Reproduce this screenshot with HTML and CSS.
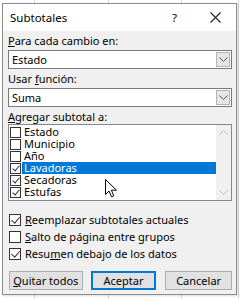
FILE: index.html
```html
<!DOCTYPE html>
<html lang="es">
<head>
    <meta charset="UTF-8">
    <title>Subtotales</title>
    <link rel="stylesheet" href="styles.css">
</head>
<body>
    <div class="dialog">
        <div class="titlebar">
            <span class="title">Subtotales</span>
            <span class="help">?</span>
            <svg class="close" width="11" height="11" viewBox="0 0 11 11">
                <path d="M0.5 0.5 L10.5 10.5 M10.5 0.5 L0.5 10.5" stroke="#222" stroke-width="1.1" fill="none"/>
            </svg>
        </div>
        <div class="content">
            <div class="label"><u>P</u>ara cada cambio en:</div>
            <div class="select">
                <span class="value">Estado</span>
                <span class="drop"><svg width="9" height="5" viewBox="0 0 9 5"><path d="M0.5 0.5 L4.5 4.5 L8.5 0.5" stroke="#555" fill="none"/></svg></span>
            </div>
            <div class="label">Usar <u>f</u>unción:</div>
            <div class="select">
                <span class="value">Suma</span>
                <span class="drop"><svg width="9" height="5" viewBox="0 0 9 5"><path d="M0.5 0.5 L4.5 4.5 L8.5 0.5" stroke="#555" fill="none"/></svg></span>
            </div>
            <div class="label"><u>A</u>gregar subtotal a:</div>
            <div class="listbox">
                <div class="items">
                    <div class="item"><span class="box"></span><span class="txt">Estado</span></div>
                    <div class="item"><span class="box"></span><span class="txt">Municipio</span></div>
                    <div class="item"><span class="box"></span><span class="txt">Año</span></div>
                    <div class="item selected"><span class="box checked"></span><span class="txt">Lavadoras</span></div>
                    <div class="item"><span class="box checked"></span><span class="txt">Secadoras</span></div>
                    <div class="item"><span class="box checked"></span><span class="txt">Estufas</span></div>
                </div>
                <div class="scrollbar">
                    <svg width="9" height="5" viewBox="0 0 9 5"><path d="M0.5 4.5 L4.5 0.5 L8.5 4.5" stroke="#bbb" fill="none"/></svg>
                    <svg width="9" height="5" viewBox="0 0 9 5"><path d="M0.5 0.5 L4.5 4.5 L8.5 0.5" stroke="#bbb" fill="none"/></svg>
                </div>
            </div>
            <div class="options">
                <div class="option"><span class="box checked"></span><span><u>R</u>eemplazar subtotales actuales</span></div>
                <div class="option"><span class="box"></span><span><u>S</u>alto de página entre grupos</span></div>
                <div class="option"><span class="box checked"></span><span>Resu<u>m</u>en debajo de los datos</span></div>
            </div>
            <div class="buttons">
                <button class="btn btn-clear"><u>Q</u>uitar todos</button>
                <button class="btn btn-ok">Aceptar</button>
                <button class="btn btn-cancel">Cancelar</button>
            </div>
        </div>
    </div>
    <svg class="cursor" width="13" height="19" viewBox="0 0 13 19">
        <path d="M0.5 0.5 L0.5 15.5 L4 12 L6.5 17.8 L8.8 16.8 L6.4 11.2 L11.5 11.2 Z" fill="#fff" stroke="#000" stroke-width="1"/>
    </svg>
</body>
</html>
```

FILE: styles.css
```css
body {
    margin: 0;
    padding: 3px 3px 4px 2px;
    font-family: "Noto Sans", sans-serif;
    font-size: 11px;
    color: #000;
    background-color: #fff;
    background-image:
        linear-gradient(to right, transparent 34px, #d8d8d8 34px, #d8d8d8 35px, transparent 35px),
        linear-gradient(to right, transparent 108px, #d8d8d8 108px, #d8d8d8 109px, transparent 109px),
        linear-gradient(to right, transparent 181px, #d8d8d8 181px, #d8d8d8 182px, transparent 182px),
        linear-gradient(to right, transparent 238px, #d8d8d8 238px, #d8d8d8 239px, transparent 239px);
    position: relative;
    height: 292px;
}

.dialog {
    width: 233px;
    height: 290px;
    border: 1px solid #8c8c8c;
    background-color: #f0f0f0;
    box-shadow: 1px 1px 2px rgba(0, 0, 0, 0.15);
    display: flex;
    flex-direction: column;
}

.titlebar {
    height: 27px;
    background-color: #fff;
    display: flex;
    align-items: center;
    padding-left: 7px;
}

.title {
    flex: 1;
    font-size: 11.5px;
}

.help {
    font-size: 11.5px;
    margin-right: 33px;
}

.close {
    margin-right: 15px;
}

.content {
    padding: 3px 4px 0 5px;
    display: flex;
    flex-direction: column;
}

.label {
    height: 14px;
    line-height: 14px;
    white-space: nowrap;
}

.select {
    height: 17px;
    margin: 2px 0 3px;
    border: 1px solid #7a7a7a;
    background-color: #fff;
    display: flex;
    align-items: center;
}

.select .value {
    flex: 1;
    padding-left: 3px;
}

.drop {
    width: 14px;
    height: 15px;
    margin-right: 1px;
    border: 1px solid #b4b4b4;
    background-color: #e6e6e6;
    display: flex;
    align-items: center;
    justify-content: center;
    box-sizing: border-box;
}

.listbox {
    height: 75px;
    border: 1px solid #828790;
    background-color: #fff;
    display: flex;
}

.items {
    flex: 1;
    padding-top: 1px;
}

.item {
    height: 12px;
    display: flex;
    align-items: center;
    padding-left: 1px;
}

.item .box {
    width: 11px;
    height: 11px;
    margin-right: 1px;
}

.item .txt {
    flex: 1;
    line-height: 12px;
    padding-left: 2px;
}

.item.selected .txt {
    background-color: #0078d7;
    color: #fff;
}

.scrollbar {
    width: 15px;
    background-color: #f0f0f0;
    display: flex;
    flex-direction: column;
    justify-content: space-between;
    align-items: center;
    padding: 5px 0;
}

.box {
    width: 11px;
    height: 11px;
    border: 1px solid #333;
    background-color: #fff;
    box-sizing: border-box;
    position: relative;
    flex-shrink: 0;
}

.box.checked::after {
    content: "";
    position: absolute;
    left: 3px;
    top: 0px;
    width: 3px;
    height: 6px;
    border-right: 1px solid #333;
    border-bottom: 1px solid #333;
    transform: rotate(40deg);
}

.options {
    margin-top: 10px;
}

.option {
    height: 17px;
    display: flex;
    align-items: center;
    white-space: nowrap;
}

.option .box {
    width: 12px;
    height: 12px;
    margin: 0 4px 0 1px;
}

.option .box.checked::after {
    left: 3px;
    top: 0px;
    width: 4px;
    height: 7px;
}

.buttons {
    margin-top: 9px;
    display: flex;
}

.btn {
    height: 19px;
    padding: 0;
    font-family: "Noto Sans", sans-serif;
    font-size: 11px;
    color: #000;
    background-color: #e1e1e1;
    border: 1px solid #adadad;
    box-sizing: border-box;
}

.btn-clear {
    width: 74px;
    margin-left: 1px;
}

.btn-ok {
    width: 66px;
    margin-left: 8px;
    border: 2px solid #0078d7;
}

.btn-cancel {
    width: 67px;
    margin-left: 9px;
}

.cursor {
    position: absolute;
    left: 105px;
    top: 179px;
}
```
